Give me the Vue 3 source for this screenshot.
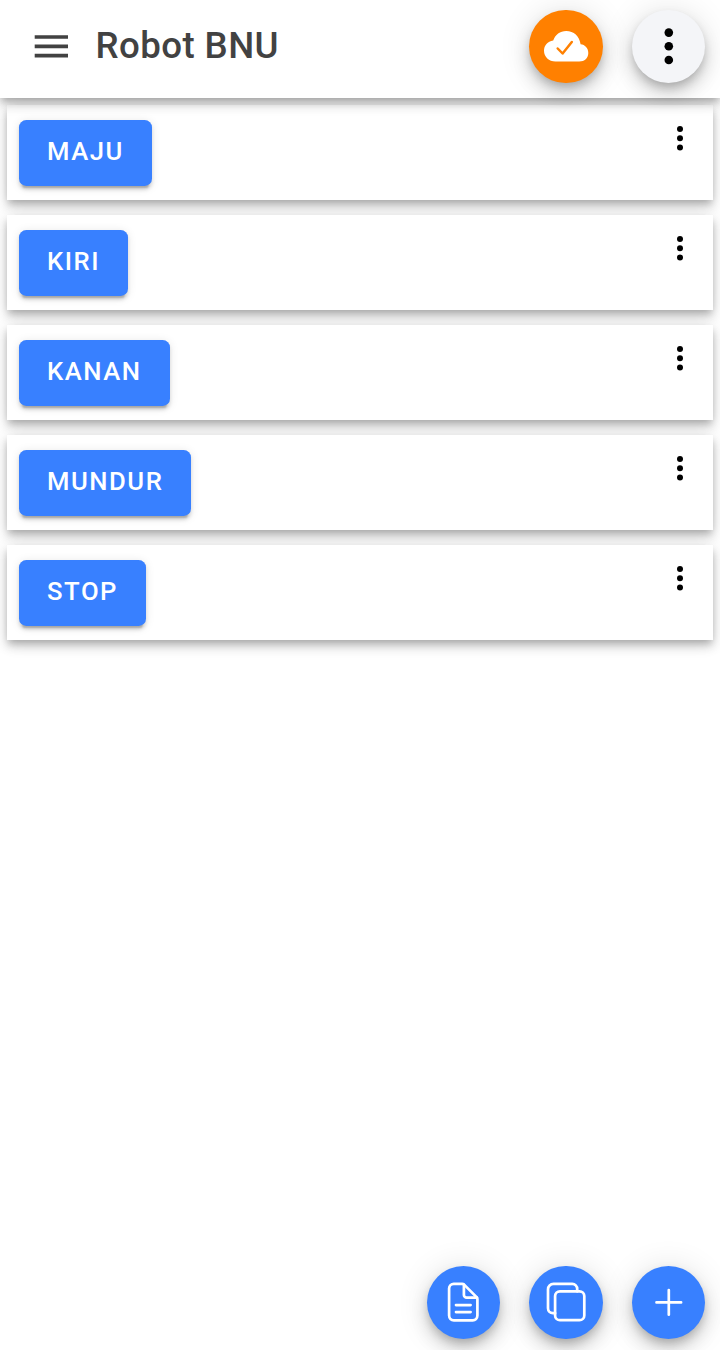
<script setup>
const commands = ['MAJU', 'KIRI', 'KANAN', 'MUNDUR', 'STOP']
</script>

<template>
  <div class="page">
    <header class="toolbar">
      <svg class="menu" viewBox="0 0 34 24" aria-label="Menu">
        <path d="M.7 2h33.3M.7 11.3h33.3M.7 20.6h33.3" />
      </svg>
      <h1>Robot BNU</h1>
      <button class="fab cloud" aria-label="Connected">
        <svg viewBox="0 0 44 44">
          <path class="solid" d="M36.6 20.2C35.4 12 29.8 6.9 22.2 6.9c-6.2 0-10.9 3.7-13 9.5C3.6 17.3 0 21.2 0 26.8c0 6.2 5 10.7 11.5 10.7h23.8c5.2 0 9-3.3 9-8.5 0-5.1-3.3-8.3-7.7-8.8Z" />
          <path class="tick" d="m13.7 24.5 4.9 5 9.2-11.5" />
        </svg>
      </button>
      <button class="fab light" aria-label="More">
        <svg viewBox="0 0 44 44">
          <circle cx="21.8" cy="8.6" r="4.3" /><circle cx="21.8" cy="22.3" r="4.3" /><circle cx="21.8" cy="36" r="4.3" />
        </svg>
      </button>
    </header>

    <main>
      <section v-for="command in commands" :key="command" class="card">
        <button class="command">{{ command }}</button>
        <svg class="options" viewBox="0 0 8 26" aria-label="Options">
          <circle cx="4" cy="4.1" r="3" /><circle cx="4" cy="13.3" r="3" /><circle cx="4" cy="22.5" r="3" />
        </svg>
      </section>
    </main>

    <footer>
      <button class="fab blue" aria-label="Document">
        <svg viewBox="0 0 44 44">
          <path d="M36.4 19.1v16.5a4.7 4.7 0 0 1-4.7 4.7H12.8a4.7 4.7 0 0 1-4.7-4.7V8.5a4.7 4.7 0 0 1 4.7-4.7h8.3a2.8 2.8 0 0 1 2 .8l12.5 12.5a2.8 2.8 0 0 1 .8 2Z" />
          <path d="M22.9 4.5v10.4a2.8 2.8 0 0 0 2.8 2.8h10.2M15 25.1h14.6M15 32.1h14.6" />
        </svg>
      </button>
      <button class="fab blue" aria-label="Copy">
        <svg viewBox="0 0 44 44">
          <rect x="11.1" y="11.3" width="29.2" height="28.9" rx="4.8" />
          <path d="M33.2 11.3V8.8a4.9 4.9 0 0 0-4.9-4.9H9.5A5.5 5.5 0 0 0 4 9.4v18.9a4.9 4.9 0 0 0 4.9 4.9h2.2" />
        </svg>
      </button>
      <button class="fab blue" aria-label="Add">
        <svg viewBox="0 0 44 44"><path d="M21.8 10.1v24.6M9.5 22.4h24.6" /></svg>
      </button>
    </footer>
  </div>
</template>

<style>
body { background: #fff; }
</style>

<style scoped>
.page {
  box-sizing: border-box;
  height: 1350px;
  display: flex;
  flex-direction: column;
  overflow: hidden;
  background: #fff;
  font-family: Roboto, "Liberation Sans", sans-serif;
}
button { border: 0; margin: 0; font-family: inherit; }
.toolbar {
  position: relative;
  z-index: 1;
  box-sizing: border-box;
  flex: none;
  height: 98px;
  padding: 0 14.7px 5px 34px;
  display: flex;
  align-items: center;
  background: #fff;
  box-shadow: 0 3.7px 7.3px -1.8px rgba(0,0,0,.2), 0 7.3px 9.2px rgba(0,0,0,.14), 0 1.8px 18.3px rgba(0,0,0,.12);
}
.menu { width: 34px; height: 24px; margin: 1px 27.5px 0 0; fill: none; stroke: #424242; stroke-width: 3.7; }
h1 { flex: 1; margin: 0; padding-bottom: 2px; color: #424242; font-size: 36.67px; line-height: 44px; font-weight: 500; letter-spacing: .0115em; }
.fab {
  flex: none;
  width: 73.4px;
  height: 73.4px;
  padding: 0;
  display: grid;
  place-items: center;
  border-radius: 50%;
  box-shadow: 0 5.5px 9.2px -1.8px rgba(0,0,0,.2), 0 11px 18.3px rgba(0,0,0,.14), 0 1.8px 33px rgba(0,0,0,.12);
}
.fab svg { width: 44px; height: 44px; overflow: visible; }
.cloud { margin-right: 29.2px; background: #ff8000; }
.solid { fill: #fff; }
.tick { fill: none; stroke: #ff8000; stroke-width: 2.5; stroke-linecap: round; stroke-linejoin: round; }
.light { background: #f4f5f8; }
main { padding: 7px 7.3px; display: flex; flex-direction: column; gap: 15px; }
.card {
  box-sizing: border-box;
  height: 95px;
  padding: 15px 29px 0 11.7px;
  display: flex;
  align-items: flex-start;
  justify-content: space-between;
  position: relative;
  background: #fff;
  box-shadow: 0 3.7px 7.3px -1.8px rgba(0,0,0,.2), 0 7.3px 9.2px rgba(0,0,0,.14), 0 1.8px 18.3px rgba(0,0,0,.12);
}
.command {
  height: 66px;
  padding: 0 28px 5px 28px;
  border-radius: 7.3px;
  background: #3880ff;
  color: #fff;
  font-size: 25.67px;
  font-weight: 500;
  letter-spacing: .06em;
  box-shadow: 0 5.5px 1.8px -3.7px rgba(0,0,0,.2), 0 3.7px 3.7px rgba(0,0,0,.12), 0 1.8px 9.2px rgba(0,0,0,.1);
}
.options { width: 8px; height: 26px; margin-top: 5px; }
footer { margin-top: auto; padding: 0 14.7px 11px; display: flex; justify-content: flex-end; gap: 29.2px; }
.blue { background: #3880ff; }
.blue svg { fill: none; stroke: #fff; stroke-width: 2.7; stroke-linecap: round; stroke-linejoin: round; }
</style>
